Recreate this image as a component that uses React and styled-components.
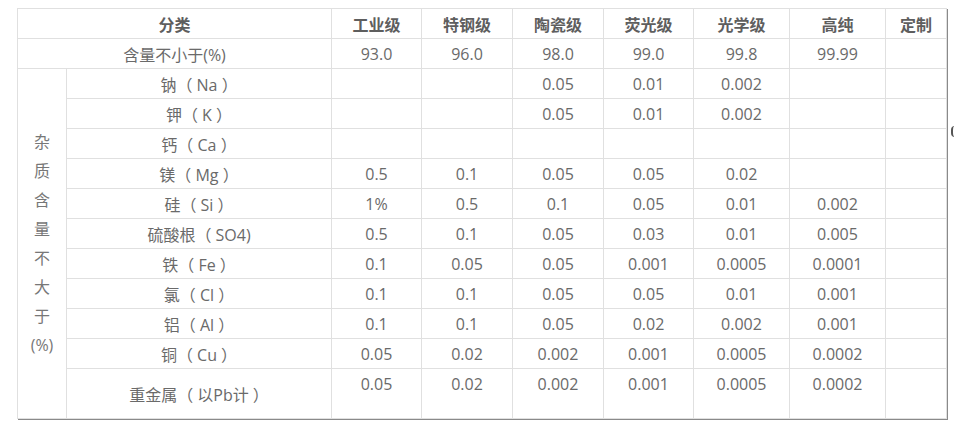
import React from "react";
import styled, { createGlobalStyle } from "styled-components";

const GRADES = ["工业级", "特钢级", "陶瓷级", "荧光级", "光学级", "高纯", "定制"];
const PURITY = ["93.0", "96.0", "98.0", "99.0", "99.8", "99.99", ""];

const IMPURITIES = [
  { name: "钠（ Na ）", values: ["", "", "0.05", "0.01", "0.002", "", ""] },
  { name: "钾（ K ）", values: ["", "", "0.05", "0.01", "0.002", "", ""] },
  { name: "钙（ Ca ）", values: ["", "", "", "", "", "", ""] },
  { name: "镁（ Mg ）", values: ["0.5", "0.1", "0.05", "0.05", "0.02", "", ""] },
  { name: "硅（ Si ）", values: ["1%", "0.5", "0.1", "0.05", "0.01", "0.002", ""] },
  { name: "硫酸根（ SO4)", values: ["0.5", "0.1", "0.05", "0.03", "0.01", "0.005", ""] },
  { name: "铁（ Fe ）", values: ["0.1", "0.05", "0.05", "0.001", "0.0005", "0.0001", ""] },
  { name: "氯（ Cl ）", values: ["0.1", "0.1", "0.05", "0.05", "0.01", "0.001", ""] },
  { name: "铝（ Al ）", values: ["0.1", "0.1", "0.05", "0.02", "0.002", "0.001", ""] },
  { name: "铜（ Cu ）", values: ["0.05", "0.02", "0.002", "0.001", "0.0005", "0.0002", ""] },
];

const HEAVY = { name: "重金属（ 以Pb计 ）", values: ["0.05", "0.02", "0.002", "0.001", "0.0005", "0.0002", ""] };

const SIDE_LABEL = ["杂", "质", "含", "量", "不", "大", "于", "(%)"];

const COL_WIDTHS = [49, 265, 90, 91, 91, 90, 96, 96, 61];

export default function App() {
  return (
    <>
      <GlobalStyle />
      <Page>
        <SpecTable>
          <colgroup>
            {COL_WIDTHS.map((w, i) => (
              <col key={i} style={{ width: w }} />
            ))}
          </colgroup>
          <tbody>
            <Row>
              <HeadCell colSpan={2}>分类</HeadCell>
              {GRADES.map((g) => (
                <HeadCell key={g}>{g}</HeadCell>
              ))}
            </Row>
            <Row>
              <Cell colSpan={2}>含量不小于(%)</Cell>
              {PURITY.map((p, i) => (
                <Cell key={i}>{p}</Cell>
              ))}
            </Row>
            {IMPURITIES.map((item, idx) => (
              <Row key={item.name}>
                {idx === 0 && (
                  <SideCell rowSpan={IMPURITIES.length + 1}>
                    {SIDE_LABEL.map((ch) => (
                      <SideChar key={ch}>{ch}</SideChar>
                    ))}
                  </SideCell>
                )}
                <Cell>{item.name}</Cell>
                {item.values.map((v, i) => (
                  <Cell key={i}>{v}</Cell>
                ))}
              </Row>
            ))}
            <Row $tall>
              <Cell>{HEAVY.name}</Cell>
              {HEAVY.values.map((v, i) => (
                <Cell key={i} $top>
                  {v}
                </Cell>
              ))}
            </Row>
          </tbody>
        </SpecTable>
        <EdgeMark />
      </Page>
    </>
  );
}

// =========================================================
// styled-components
// =========================================================

const GlobalStyle = createGlobalStyle`
  body {
    margin: 0;
    background: #ffffff;
    font-family: "Open Sans", "Noto Sans CJK SC", sans-serif;
  }
`;

const Page = styled.div`
  position: relative;

  width: 954px;
  height: 428px;
  padding: 8px 0 0 17px;

  box-sizing: border-box;
  overflow: hidden;
`;

const SpecTable = styled.table`
  width: 929px;

  table-layout: fixed;
  border-collapse: collapse;

  box-shadow: 1px 1px 0 #8a8a8a;
`;

const Row = styled.tr`
  height: ${(p) => (p.$tall ? 50 : 30)}px;
`;

const Cell = styled.td`
  padding: 0;

  border: 1px solid #e0e0e0;

  text-align: center;
  vertical-align: ${(p) => (p.$top ? "top" : "middle")};

  font-size: 16px;
  line-height: ${(p) => (p.$top ? "30px" : "normal")};
  color: #6a6a6a;
  white-space: nowrap;
`;

const HeadCell = styled(Cell)`
  font-weight: 700;
  color: #5e5e5e;
`;

const SideCell = styled(Cell)`
  vertical-align: middle;
  white-space: normal;
  color: #777777;
`;

const SideChar = styled.div`
  line-height: 29px;
`;

const EdgeMark = styled.span`
  position: absolute;
  left: 951px;
  top: 126px;

  width: 2px;
  height: 11px;

  border-left: 2px solid #555555;
  border-radius: 4px 0 0 4px;
`;
